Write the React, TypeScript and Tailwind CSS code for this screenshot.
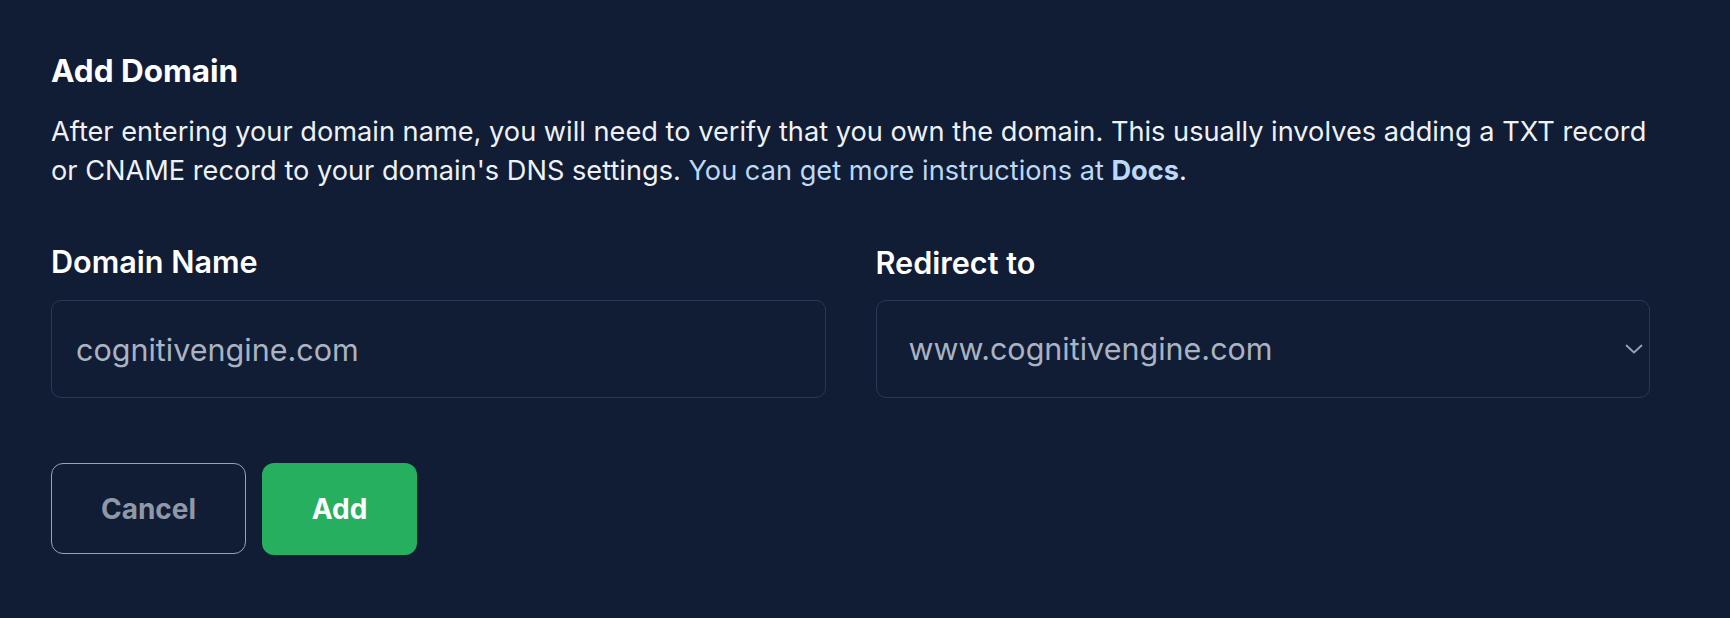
import { useState } from "react";

export default function App() {
  const [domain, setDomain] = useState("cognitivengine.com");
  const [redirect, setRedirect] = useState("www.cognitivengine.com");

  return (
    <div
      className="min-h-screen bg-[#111c35] px-[51px] pt-[51px] text-white"
      style={{ fontFamily: "Inter, 'Noto Sans', sans-serif" }}
    >
      <div className="w-[1599px]">
        <h2 className="text-[31.5px] leading-[40px] font-bold text-white">Add Domain</h2>
        <p className="mt-[21px] text-[27.2px] leading-[39px] text-[#eef2f7]">
          After entering your domain name, you will need to verify that you own the domain. This usually
          involves adding a TXT record or CNAME record to your domain's DNS settings.{" "}
          <a href="#" className="text-[#bcd9f8]">
            You can get more instructions at <span className="font-bold">Docs</span>
          </a>
          .
        </p>

        <div className="mt-[53px] grid grid-cols-2 gap-[50px]">
          <label className="flex flex-col">
            <span className="text-[30.6px] leading-[37px] font-semibold text-white">Domain Name</span>
            <input
              value={domain}
              onChange={(e) => setDomain(e.target.value)}
              className="mt-[20px] h-[98px] rounded-[10px] border-[1.6px] border-[#2c3851] bg-transparent px-[24px] text-[30.5px] text-[#a9b3c2] outline-none"
            />
          </label>

          <label className="flex flex-col">
            <span className="pt-[2px] text-[30.6px] leading-[35px] font-semibold text-white">Redirect to</span>
            <div className="relative mt-[20px]">
              <select
                value={redirect}
                onChange={(e) => setRedirect(e.target.value)}
                className="h-[98px] w-full appearance-none rounded-[10px] border-[1.6px] border-[#2c3851] bg-transparent pl-[32px] pr-[40px] text-[30.5px] text-[#a9b3c2] outline-none"
              >
                <option className="bg-[#111c35]">www.cognitivengine.com</option>
                <option className="bg-[#111c35]">cognitivengine.com</option>
              </select>
              <svg
                className="pointer-events-none absolute right-[7px] top-[44px] h-[10px] w-[18px]"
                viewBox="0 0 18 10"
                fill="none"
                stroke="#94a3b8"
                strokeWidth="1.8"
                strokeLinecap="round"
                strokeLinejoin="round"
              >
                <path d="M1.5 1.5 L9 8.5 L16.5 1.5" />
              </svg>
            </div>
          </label>
        </div>

        <div className="mt-[65px] flex gap-[16px]">
          <button className="h-[91px] w-[195px] rounded-[12px] border-[1.6px] border-[#9aa3b0] text-[28px] font-bold text-[#8f98a6]">
            Cancel
          </button>
          <button className="h-[92px] w-[155px] rounded-[12px] bg-[#25af5e] text-[28px] font-bold text-white">
            Add
          </button>
        </div>
      </div>
    </div>
  );
}
